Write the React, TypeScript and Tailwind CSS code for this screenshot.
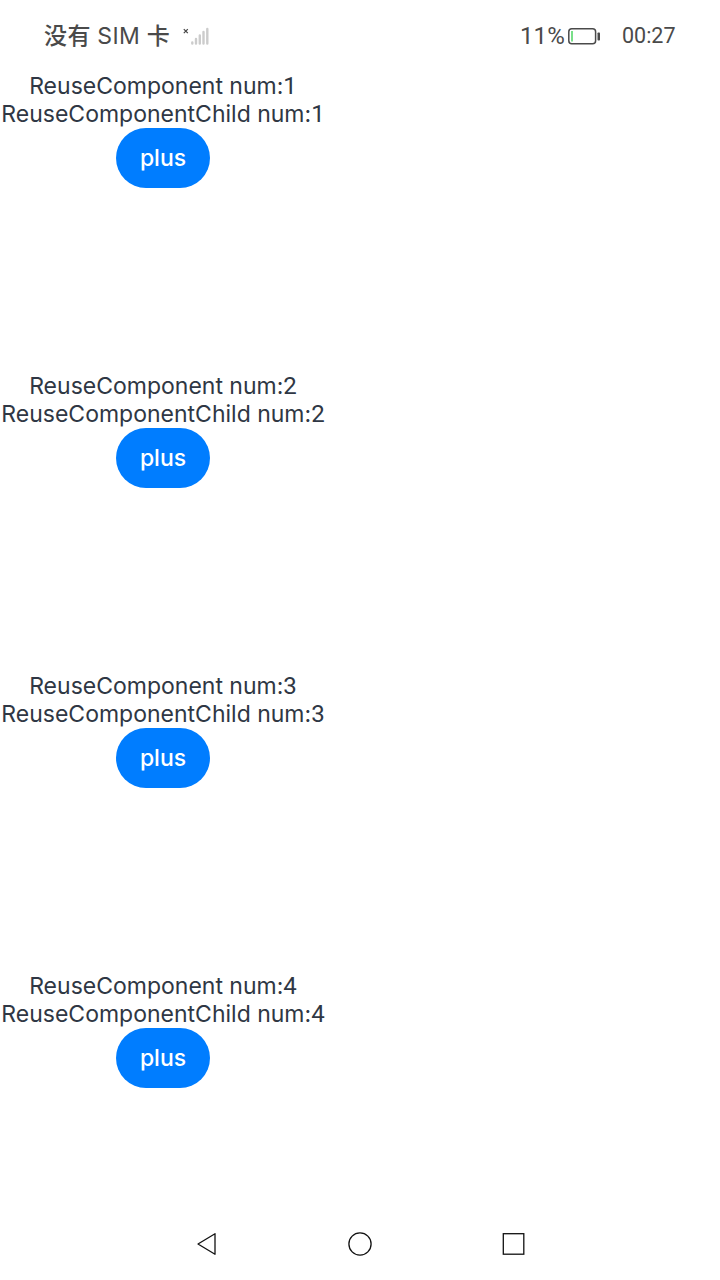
const items = [1, 2, 3, 4];

function StatusBar() {
  return (
    <header className="flex h-[72px] shrink-0 items-center justify-between pl-[44px] pr-[45px] text-[#4a4a4a]">
      <div className="flex items-center">
        <span className="w-[126px] whitespace-nowrap font-['Inter','Noto_Sans_CJK_SC',sans-serif] text-[23px] font-medium leading-7 tracking-[0.4px]">没有 <span className="font-normal">SIM</span> 卡</span>
        <svg className="ml-[13px]" width="28" height="20" viewBox="0 0 28 20" fill="none">
          <path d="M0.800 3.200 4.800 7.200M4.800 3.200 0.800 7.200" stroke="#444" strokeWidth="1.200" />
          <path d="M9.300 17.500v-1M13 17.500v-4.500M16.800 17.500v-8M20.500 17.500v-11.500M24.300 17.500v-14.500" stroke="#cccccc" strokeWidth="2.400" strokeLinecap="round" />
        </svg>
      </div>
      <div className="flex items-center">
        <span className="w-[46px] whitespace-nowrap font-['Roboto',sans-serif] text-[24px] leading-7 tracking-[0.1px]">11%</span>
        <svg className="ml-[2px]" width="34" height="20" viewBox="0 0 34 20" fill="none">
          <rect x="0.800" y="2.800" width="26.800" height="15" rx="3" stroke="#4a4a4a" strokeWidth="1.500" />
          <rect x="3" y="5" width="2" height="10.500" fill="#79df89" />
          <rect x="29.500" y="6.500" width="2.500" height="8" rx="0.800" fill="#4a4a4a" />
        </svg>
        <span className="ml-5 w-[53px] whitespace-nowrap font-['Roboto',sans-serif] text-[21.5px] leading-7">00:27</span>
      </div>
    </header>
  );
}

function Count({ value }: { value: number }) {
  return <span className="font-['Roboto',sans-serif] text-[24px]">{value}</span>;
}

function ReuseComponent({ num }: { num: number }) {
  return (
    <section className="flex h-[300px] w-[326px] flex-col items-center whitespace-nowrap font-['Inter',sans-serif] text-[23px] leading-7 text-[#2f3744]">
      <p className="h-7 leading-7">ReuseComponent num:<Count value={num} /></p>
      <p className="h-7 leading-7">ReuseComponentChild num:<Count value={num} /></p>
      <button className="h-[60px] w-[94px] rounded-full bg-[#007dff] font-medium text-white">plus</button>
    </section>
  );
}

function NavigationBar() {
  return (
    <nav className="flex h-[72px] shrink-0 items-center justify-center gap-[126px]">
      <button aria-label="Back">
        <svg width="28" height="28" viewBox="0 0 28 28" fill="none" stroke="#111" strokeWidth="1.300" strokeLinejoin="round">
          <path d="M6 14 23 3.700v20.600z" />
        </svg>
      </button>
      <button aria-label="Home">
        <svg width="28" height="28" viewBox="0 0 28 28" fill="none" stroke="#111" strokeWidth="1.300">
          <circle cx="14" cy="14" r="11.100" />
        </svg>
      </button>
      <button aria-label="Recent apps">
        <svg width="28" height="28" viewBox="0 0 28 28" fill="none" stroke="#111" strokeWidth="1.300">
          <rect x="3.300" y="3.700" width="20.500" height="20.500" />
        </svg>
      </button>
    </nav>
  );
}

export default function App() {
  return (
    <div className="flex h-[1280px] w-[720px] flex-col overflow-hidden bg-white">
      <StatusBar />
      <main className="min-h-0 flex-1 overflow-hidden">
        {items.map((num) => (
          <ReuseComponent key={num} num={num} />
        ))}
      </main>
      <NavigationBar />
    </div>
  );
}
